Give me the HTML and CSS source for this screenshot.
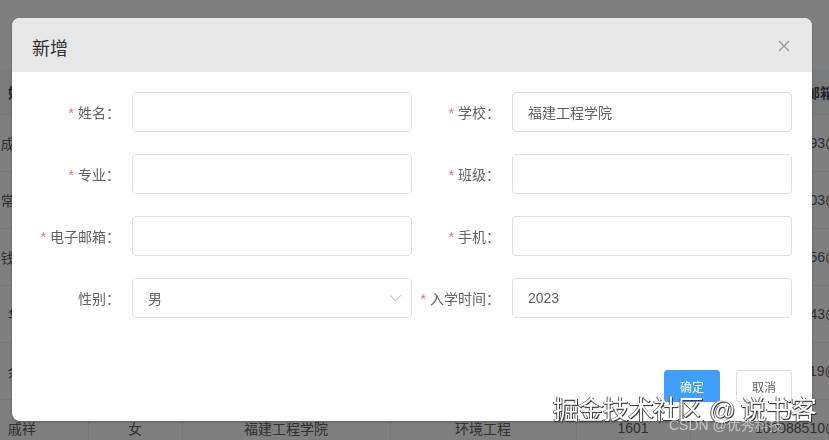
FILE: index.html
```html
<!DOCTYPE html>
<html lang="zh-CN">
<head>
<meta charset="utf-8">
<title>新增</title>
<link rel="stylesheet" href="styles.css">
</head>
<body>
<div class="page">
  <table class="grid">
    <colgroup>
      <col class="c1"><col class="c2"><col class="c3"><col class="c4"><col class="c5"><col class="c6">
    </colgroup>
    <thead>
      <tr><th>姓名</th><th>性别</th><th>学校</th><th>专业</th><th>班级</th><th>邮箱</th></tr>
    </thead>
    <tbody>
      <tr><td>成思远</td><td>男</td><td>福建工程学院</td><td>软件工程</td><td>1602</td><td>274561893@qq.com</td></tr>
      <tr><td>常文杰</td><td>男</td><td>福建工程学院</td><td>计算机科学</td><td>1603</td><td>315267403@qq.com</td></tr>
      <tr><td>钱晓峰</td><td>男</td><td>福建工程学院</td><td>通信工程</td><td>1604</td><td>482910556@qq.com</td></tr>
      <tr><td>华宇</td><td>女</td><td>福建工程学院</td><td>土木工程</td><td>1605</td><td>562301843@qq.com</td></tr>
      <tr><td>余丽</td><td>女</td><td>福建工程学院</td><td>电子信息</td><td>1606</td><td>639285119@qq.com</td></tr>
      <tr><td>戚祥</td><td>女</td><td>福建工程学院</td><td>环境工程</td><td>1601</td><td>160088510@qq.com</td></tr>
    </tbody>
  </table>
</div>

<div class="overlay">
  <div class="dialog">
    <div class="dialog-header">
      <span class="dialog-title">新增</span>
      <svg class="close" viewBox="0 0 12 12" width="12" height="12"><path d="M1 1 L11 11 M11 1 L1 11" stroke="#909399" stroke-width="1.2" fill="none"/></svg>
    </div>
    <div class="dialog-body">
      <div class="form-grid">
        <div class="item"><label class="label"><span class="req">*</span>姓名：</label><div class="input"></div></div>
        <div class="item"><label class="label"><span class="req">*</span>学校：</label><div class="input">福建工程学院</div></div>
        <div class="item"><label class="label"><span class="req">*</span>专业：</label><div class="input"></div></div>
        <div class="item"><label class="label"><span class="req">*</span>班级：</label><div class="input"></div></div>
        <div class="item"><label class="label"><span class="req">*</span>电子邮箱：</label><div class="input"></div></div>
        <div class="item"><label class="label"><span class="req">*</span>手机：</label><div class="input"></div></div>
        <div class="item"><label class="label">性别：</label><div class="input select"><span>男</span><svg class="chev" viewBox="0 0 14 8" width="13" height="8"><path d="M1 1 L7 7 L13 1" stroke="#c0c4cc" stroke-width="1.2" fill="none"/></svg></div></div>
        <div class="item"><label class="label"><span class="req">*</span>入学时间：</label><div class="input">2023</div></div>
      </div>
    </div>
    <div class="dialog-footer">
      <button class="btn primary">确定</button>
      <button class="btn">取消</button>
    </div>
  </div>
  <div class="watermark">
    <span class="wm-main">掘金技术社区 @ 说书客</span>
    <span class="wm-sub">CSDN @优秀科技</span>
  </div>
</div>
</body>
</html>
```

FILE: styles.css
```css
html, body {
  margin: 0;
  padding: 0;
  width: 829px;
  height: 440px;
  overflow: hidden;
  background: #ffffff;
  font-family: "Liberation Sans", "Noto Sans CJK SC", sans-serif;
}

.page {
  padding-top: 70px;
  width: 829px;
  overflow: hidden;
}

.grid {
  table-layout: fixed;
  border-collapse: collapse;
  margin-left: -44px;
  width: 994px;
  font-size: 14px;
  color: #606266;
}
.c1 { width: 132px; }
.c2 { width: 94px; }
.c3 { width: 208px; }
.c4 { width: 186px; }
.c5 { width: 114px; }
.c6 { width: 260px; }

.grid th {
  height: 44px;
  background: #f5f7fa;
  color: #4a4c52;
  font-weight: bold;
  text-align: center;
  border-bottom: 1px solid #ebeef5;
  padding: 0;
}
.grid td {
  height: 56px;
  text-align: center;
  border-bottom: 1px solid #ebeef5;
  border-right: 1px solid #ebeef5;
  padding: 0;
  white-space: nowrap;
}

.overlay {
  position: fixed;
  inset: 0;
  background: rgba(0, 0, 0, 0.5);
}

.dialog {
  margin: 18px 0 0 12px;
  width: 800px;
  background: #ffffff;
  border-radius: 8px;
  overflow: hidden;
  box-shadow: 0 1px 3px rgba(0, 0, 0, 0.3);
}

.dialog-header {
  height: 54px;
  box-sizing: border-box;
  background: #e7e7e7;
  display: flex;
  align-items: center;
  justify-content: space-between;
  padding: 8px 22px 0 20px;
}
.dialog-title {
  font-size: 18px;
  color: #303133;
  line-height: 24px;
}
.close {
  display: block;
  margin-top: -6px;
}

.dialog-body {
  padding: 20px 20px 0 20px;
}

.form-grid {
  display: grid;
  grid-template-columns: 380px 380px;
  row-gap: 22px;
}

.item {
  display: flex;
  align-items: center;
  height: 40px;
}

.label {
  width: 100px;
  box-sizing: border-box;
  padding-right: 12px;
  text-align: right;
  font-size: 14px;
  color: #606266;
  white-space: nowrap;
}
.req {
  color: #f56c6c;
  margin-right: 4px;
}

.input {
  width: 280px;
  height: 40px;
  box-sizing: border-box;
  border: 1px solid #dcdfe6;
  border-radius: 4px;
  padding: 0 15px;
  display: flex;
  align-items: center;
  font-size: 14px;
  color: #606266;
}
.select {
  justify-content: space-between;
  padding-right: 8px;
}
.chev {
  display: block;
  margin-right: 1px;
}

.dialog-footer {
  display: flex;
  justify-content: flex-end;
  gap: 16px;
  padding: 52px 20px 19px 20px;
}

.btn {
  height: 32px;
  width: 56px;
  padding: 0;
  border: 1px solid #dcdfe6;
  border-radius: 3px;
  background: #ffffff;
  color: #606266;
  font-size: 12px;
  font-family: "Liberation Sans", "Noto Sans CJK SC", sans-serif;
}
.btn.primary {
  background: #409eff;
  border-color: #409eff;
  color: #ffffff;
}

.watermark {
  position: absolute;
  left: 553px;
  top: 394px;
  width: 276px;
  height: 46px;
}
.wm-main {
  position: absolute;
  left: 0;
  top: 0;
  font-size: 26px;
  line-height: 32px;
  color: #ffffff;
  white-space: nowrap;
  letter-spacing: -1px;
  text-shadow: 1px 1px 0 #3a3a3a, -1px 0 0 #5a5a5a, 0 1px 1px #333;
}
.wm-sub {
  position: absolute;
  left: 116px;
  top: 22px;
  font-size: 14px;
  line-height: 18px;
  color: rgba(255, 255, 255, 0.55);
  white-space: nowrap;
}
```
